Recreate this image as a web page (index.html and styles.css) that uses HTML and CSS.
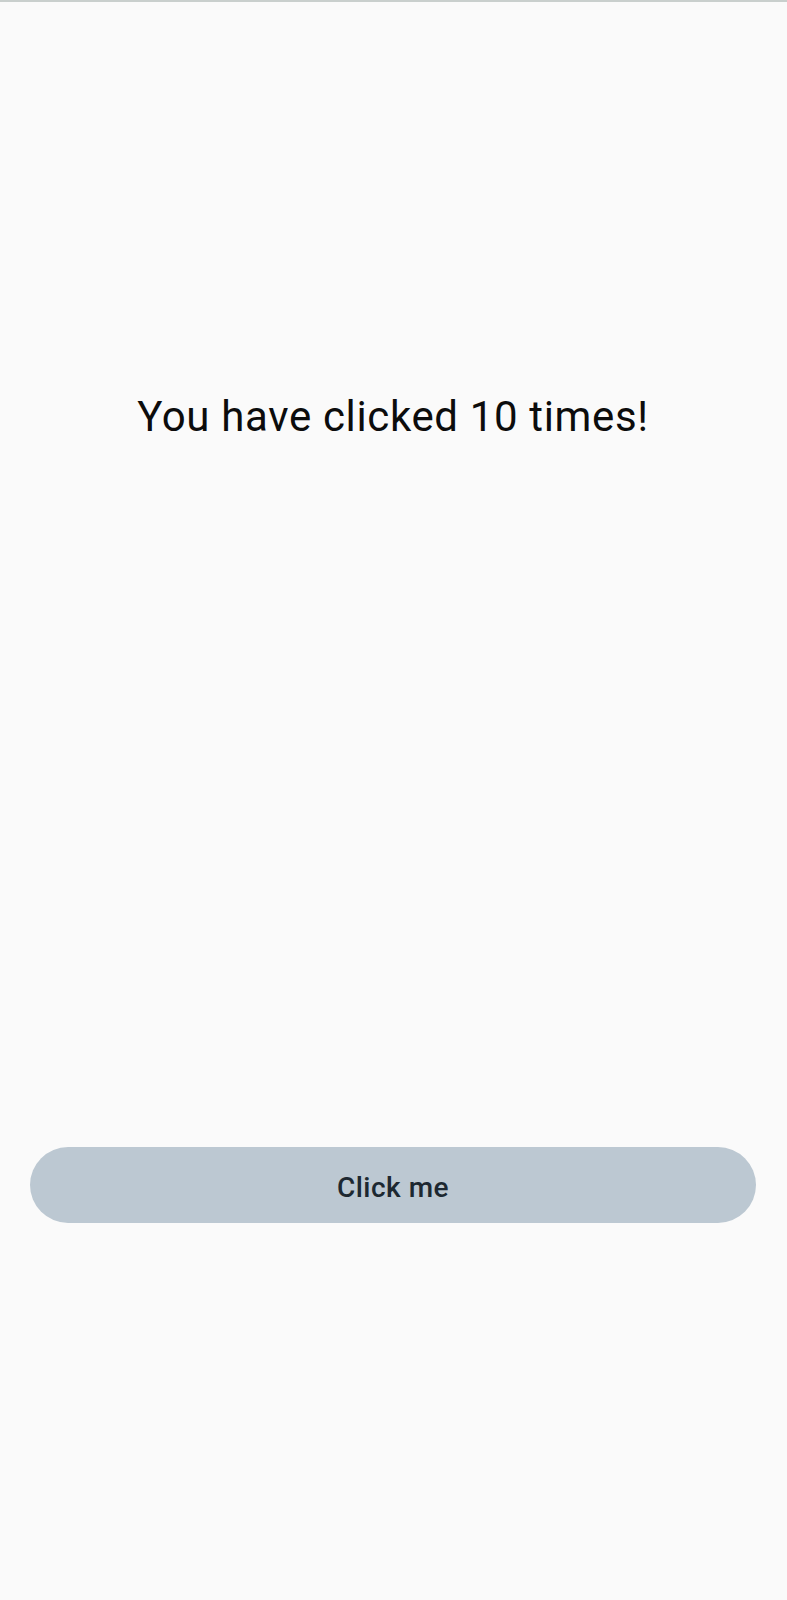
FILE: index.html
```html
<!DOCTYPE html>
<html>
<head>
<meta charset="utf-8">
<link rel="stylesheet" href="styles.css">
</head>
<body>
<div class="screen">
  <p class="counter">You have clicked 10 times!</p>
  <button class="action">Click me</button>
</div>
</body>
</html>
```
FILE: styles.css
```css
html, body {
  margin: 0;
  padding: 0;
  background: #fafafa;
}
.screen {
  min-height: 1598px;
  border-top: 2px solid #c9cfcd;
  display: flex;
  flex-direction: column;
  padding: 0 31px 0 30px;
  font-family: Roboto, "Noto Sans", sans-serif;
}
.counter {
  margin: 391px 0 0;
  font-size: 42px;
  line-height: 48px;
  letter-spacing: 0.65px;
  text-align: center;
  color: #0c0c0c;
}
.action {
  margin-top: 706px;
  height: 76px;
  border: none;
  border-radius: 38px;
  background: #bcc8d2;
  color: #1d2831;
  font-family: Roboto, "Noto Sans", sans-serif;
  font-size: 28px;
  font-weight: 500;
  letter-spacing: 0.5px;
  padding: 5px 0 0;
}
```
